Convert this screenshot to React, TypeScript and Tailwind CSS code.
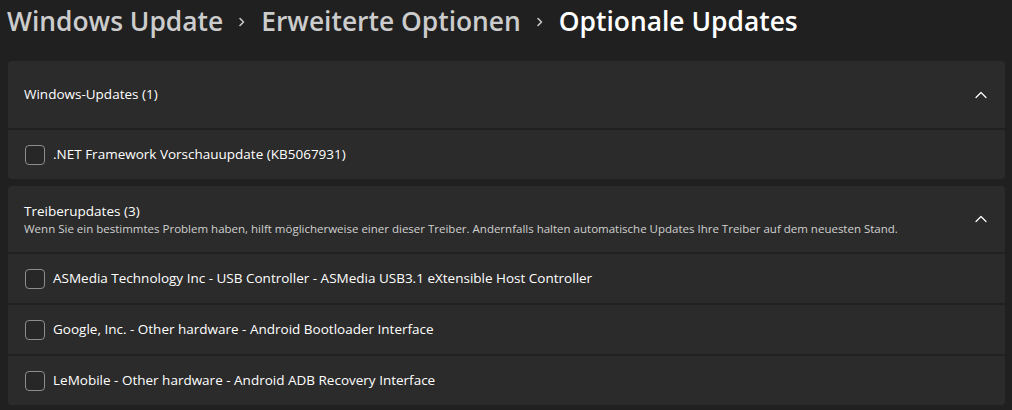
import React from 'react';

const font = { fontFamily: '"Segoe UI", "Open Sans", "Noto Sans", sans-serif' };

function ChevronUp() {
    return (
        <svg width="12" height="8" viewBox="0 0 12 8" fill="none" className="text-white">
            <path d="M1 6.5 L6 1.5 L11 6.5" stroke="currentColor" strokeWidth="1.2" strokeLinecap="round" strokeLinejoin="round" />
        </svg>
    );
}

function Crumb() {
    return (
        <svg width="10" height="14" viewBox="0 0 10 14" fill="none" className="text-[#c8c8c8]">
            <path d="M3 3.5 L6.5 7 L3 10.5" stroke="currentColor" strokeWidth="1.6" strokeLinecap="round" strokeLinejoin="round" />
        </svg>
    );
}

function UpdateRow({ label, last }: { label: string; last?: boolean }) {
    return (
        <div className={`flex h-[49px] items-center bg-[#2b2b2b] pl-[17px] ${last ? 'rounded-b-[4px]' : ''}`}>
            <div className="h-[20px] w-[20px] rounded-[4px] border border-[#8d8d8d] bg-[#272727]" />
            <span className="ml-[8px] text-[13.5px] text-white">{label}</span>
        </div>
    );
}

const drivers = [
    'ASMedia Technology Inc - USB Controller - ASMedia USB3.1 eXtensible Host Controller',
    'Google, Inc. - Other hardware - Android Bootloader Interface',
    'LeMobile - Other hardware - Android ADB Recovery Interface',
];

export default function App() {
    return (
        <div className="h-[410px] w-[1012px] overflow-hidden bg-[#202020]" style={font}>
            <div className="flex h-[44px] items-center gap-[14px] pl-[7px] text-[26.4px] font-semibold">
                <span className="text-[#cccccc]">Windows Update</span>
                <Crumb />
                <span className="text-[#cccccc]">Erweiterte Optionen</span>
                <Crumb />
                <span className="text-white">Optionale Updates</span>
            </div>

            <div className="ml-2 mr-[7px] mt-[17px] flex flex-col">
                <div className="flex flex-col gap-[2px]">
                    <div className="flex h-[67px] items-center justify-between rounded-t-[4px] bg-[#2b2b2b] pl-[16px] pr-[18px]">
                        <span className="text-[13.5px] text-white">Windows-Updates (1)</span>
                        <ChevronUp />
                    </div>
                    <UpdateRow label=".NET Framework Vorschauupdate (KB5067931)" last />
                </div>

                <div className="mt-[7px] flex flex-col gap-[2px]">
                    <div className="flex h-[66px] items-center justify-between rounded-t-[4px] bg-[#2b2b2b] pl-[16px] pr-[18px]">
                        <div className="flex flex-col">
                            <span className="text-[13.5px] leading-[19px] text-white">Treiberupdates (3)</span>
                            <span className="text-[11.5px] leading-[16px] text-[#d0d0d0]">
                                Wenn Sie ein bestimmtes Problem haben, hilft möglicherweise einer dieser Treiber. Andernfalls halten automatische Updates Ihre Treiber auf dem neuesten Stand.
                            </span>
                        </div>
                        <ChevronUp />
                    </div>
                    {drivers.map((d, i) => (
                        <UpdateRow key={d} label={d} last={i === drivers.length - 1} />
                    ))}
                </div>
            </div>
        </div>
    );
}
